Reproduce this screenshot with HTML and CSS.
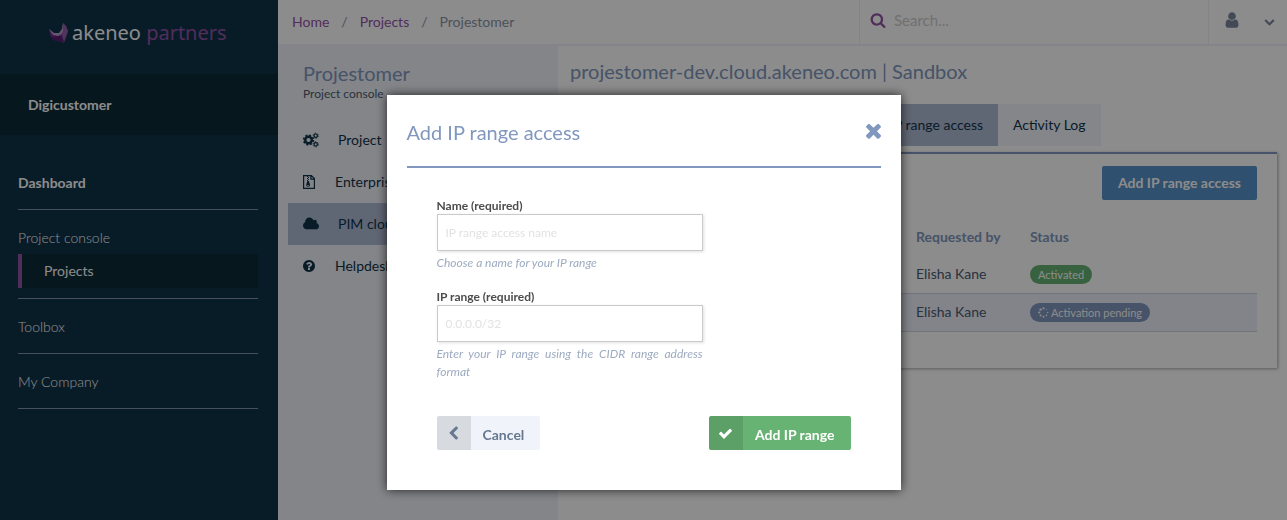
FILE: index.html
```html
<!DOCTYPE html>
<html lang="en">
<head>
<meta charset="utf-8">
<title>Akeneo partners</title>
<link rel="stylesheet" href="styles.css">
</head>
<body>
<div class="app">
  <aside class="sidebar">
    <div class="brand">
      <svg class="brand-mark" viewBox="0 0 20 20" aria-hidden="true">
        <path d="M0 6l5 4h5l3-4 1-6 3 3 2 5-1 4-3 8-5-2-6-1-3-5z" fill="#71308a"/>
        <path d="M0 6l5 4h5l3-4 1-6 1 5-2 6-4 2-5-1z" fill="#b79fc6"/>
        <path d="M14 0l3 3 2 5-4 11-2-7 1-4z" fill="#8f62a8"/>
        <path d="M3 14l9-1 3 6-6-1-5-1z" fill="#5a1c74"/>
      </svg>
      <span class="brand-name">akeneo <span class="brand-accent">partners</span></span>
    </div>
    <div class="customer">Digicustomer</div>
    <nav class="side-nav">
      <div class="side-group"><a href="#" class="side-link strong">Dashboard</a></div>
      <div class="side-group with-sub"><a href="#" class="side-link">Project console</a><a href="#" class="side-sub">Projects</a></div>
      <div class="side-group"><a href="#" class="side-link">Toolbox</a></div>
      <div class="side-group"><a href="#" class="side-link">My Company</a></div>
    </nav>
  </aside>
  <div class="workspace">
    <header class="topbar">
      <nav class="crumbs"><a href="#">Home</a><span>/</span><a href="#">Projects</a><span>/</span><span>Projestomer</span></nav>
      <label class="search">
        <svg viewBox="0 0 1792 1792" aria-hidden="true"><path d="M1216 832q0-185-131.500-316.500t-316.500-131.500-316.500 131.500-131.500 316.500 131.500 316.500 316.500 131.500 316.500-131.500 131.500-316.500zm512 832q0 52-38 90t-90 38q-54 0-90-38l-343-342q-179 124-399 124-143 0-273.500-55.500t-225-150-150-225-55.500-273.500 55.500-273.500 150-225 225-150 273.500-55.500 273.500 55.500 225 150 150 225 55.500 273.500q0 220-124 399l343 343q37 37 37 90z"/></svg>
        <input type="search" placeholder="Search..." aria-label="Search">
      </label>
      <button class="account" type="button" aria-label="Account">
        <svg class="icon-user" viewBox="0 0 1792 1792" aria-hidden="true"><path d="M1536 1399q0 109-62.500 187t-150.500 78h-854q-88 0-150.500-78t-62.500-187q0-85 8.500-160.500t31.500-152 58.500-131 94-89 134.500-34.500q131 128 313 128t313-128q76 0 134.500 34.500t94 89 58.500 131 31.500 152 8.500 160.500zm-256-887q0 159-112.500 271.500t-271.500 112.500-271.500-112.500-112.500-271.500 112.500-271.500 271.500-112.500 271.500 112.500 112.500 271.500z"/></svg>
        <svg class="icon-down" viewBox="0 0 1792 1792" aria-hidden="true"><path d="M1683 808l-742 741q-19 19-45 19t-45-19l-742-741q-19-19-19-45.500t19-45.500l166-165q19-19 45-19t45 19l531 531 531-531q19-19 45-19t45 19l166 165q19 19 19 45.500t-19 45.500z"/></svg>
      </button>
    </header>
    <div class="body">
      <section class="project">
        <h2 class="title">Projestomer</h2>
        <p class="subtitle">Project console</p>
        <nav class="project-nav">
          <a href="#" class="project-link wide">
            <svg viewBox="0 0 16 16" aria-hidden="true"><g fill="none" stroke="currentColor"><circle cx="5.500" cy="8" r="3.300" stroke-width="2.400"/><circle cx="5.500" cy="8" r="4.800" stroke-width="1.600" stroke-dasharray="2 1.770"/><circle cx="12.700" cy="3.700" r="1.700" stroke-width="1.200"/><circle cx="12.700" cy="3.700" r="2.600" stroke-width="1" stroke-dasharray="1.300 1.420"/><circle cx="12.700" cy="12.300" r="1.700" stroke-width="1.200"/><circle cx="12.700" cy="12.300" r="2.600" stroke-width="1" stroke-dasharray="1.300 1.420"/></g></svg>Project</a>
          <a href="#" class="project-link">
            <svg viewBox="0 0 16 16" aria-hidden="true"><path fill="none" stroke="currentColor" stroke-width="1.200" d="M.6 1.600h7.800l3 3v9.800H.6zM7.900 1.600v3.500h3.500"/><path fill="currentColor" d="M4 2h1v1H4zM5 3h1v1H5zM4 4h1v1H4zM5 5h1v1H5zM4 6h1v1H4zM4.300 7h1.600l1.200 4q.3 1.700-1.900 1.800-2.400 0-2-1.800zM4.300 11.200h1.800v.8H4.300z" fill-rule="evenodd"/></svg>Enterprise</a>
          <a href="#" class="project-link wide active">
            <svg viewBox="64 0 1920 1792" aria-hidden="true"><path fill="currentColor" d="M1984 1152q0 159-112.500 271.500t-271.500 112.500h-1088q-185 0-316.500-131.500t-131.500-316.500q0-132 71-241.500t187-163.500q-2-28-2-43 0-212 150-362t362-150q158 0 286.500 88t187.500 230q70-62 166-62 106 0 181 75t75 181q0 75-41 138 129 30 213 134.500t84 239.500z"/></svg>PIM cloud</a>
          <a href="#" class="project-link">
            <svg viewBox="128 128 1792 1536" preserveAspectRatio="xMinYMid meet" aria-hidden="true"><path fill="currentColor" d="M1024 1376v-192q0-14-9-23t-23-9h-192q-14 0-23 9t-9 23v192q0 14 9 23t23 9h192q14 0 23-9t9-23zm256-672q0-88-55.500-163t-138.500-116-170-41q-243 0-371 213-15 24 8 42l132 100q7 6 19 6 16 0 25-12 53-68 86-92 34-24 86-24 48 0 85.500 26t37.500 59q0 38-20 61t-68 45q-63 28-115.500 86.500t-52.500 125.500v36q0 14 9 23t23 9h192q14 0 23-9t9-23q0-19 21.500-49.500t54.500-49.500q32-18 49-28.500t46-35 44.500-48 28-60.500 12.500-81zm384 192q0 209-103 385.500t-279.500 279.500-385.500 103-385.500-103-279.500-279.500-103-385.500 103-385.500 279.500-279.500 385.500-103 385.500 103 279.500 279.500 103 385.500z"/></svg>Helpdesk</a>
        </nav>
      </section>
      <main class="main">
        <h1 class="title">projestomer-dev.cloud.akeneo.com | Sandbox</h1>
        <div class="tabs"><a href="#" class="tab active">IP range access</a><a href="#" class="tab">Activity Log</a></div>
        <div class="card">
          <button class="primary" type="button">Add IP range access</button>
          <table class="ranges">
            <colgroup><col><col class="col-user"><col class="col-status"></colgroup>
            <thead><tr><th></th><th>Requested by</th><th>Status</th></tr></thead>
            <tbody>
              <tr><td></td><td>Elisha Kane</td><td><span class="badge ok">Activated</span></td></tr>
              <tr><td></td><td>Elisha Kane</td><td><span class="badge pending"><svg viewBox="0 0 12 12" aria-hidden="true"><circle cx="2.800" cy="2.800" r="1.300"/><circle cx="1.300" cy="6" r="1.200"/><circle cx="2.800" cy="9.200" r="1.100"/><circle cx="6" cy="10.600" r="1"/><circle cx="9.200" cy="9.200" r=".9"/><circle cx="10.600" cy="6" r=".8"/><circle cx="9.200" cy="2.800" r=".6"/><circle cx="6" cy="1.400" r="1.200"/></svg>Activation pending</span></td></tr>
            </tbody>
          </table>
        </div>
      </main>
    </div>
  </div>
</div>
<div class="overlay">
  <form class="dialog" role="dialog" aria-labelledby="dialog-title">
    <div class="dialog-head">
      <h2 class="title" id="dialog-title">Add IP range access</h2>
      <button class="close" type="button" aria-label="Close"><svg viewBox="302 302 1188 1188" aria-hidden="true"><path d="M1490 1322q0 40-28 68l-136 136q-28 28-68 28t-68-28l-294-294-294 294q-28 28-68 28t-68-28l-136-136q-28-28-28-68t28-68l294-294-294-294q-28-28-28-68t28-68l136-136q28-28 68-28t68 28l294 294 294-294q28-28 68-28t68 28l136 136q28 28 28 68t-28 68l-294 294 294 294q28 28 28 68z"/></svg></button>
    </div>
    <div class="dialog-body">
      <div class="field">
        <label for="name">Name (required)</label>
        <input id="name" type="text" placeholder="IP range access name">
        <p class="hint">Choose a name for your IP range</p>
      </div>
      <div class="field">
        <label for="range">IP range (required)</label>
        <input id="range" type="text" placeholder="0.0.0.0/32">
        <p class="hint">Enter your IP range using the CIDR range address format</p>
      </div>
      <div class="actions">
        <button class="action cancel" type="button"><span class="action-icon"><svg viewBox="0 0 1792 1792" aria-hidden="true"><path d="M1427 301l-531 531 531 531q19 19 19 45t-19 45l-166 166q-19 19-45 19t-45-19l-742-742q-19-19-19-45t19-45l742-742q19-19 45-19t45 19l166 166q19 19 19 45t-19 45z"/></svg></span><span class="action-text">Cancel</span></button>
        <button class="action submit" type="button"><span class="action-icon"><svg viewBox="0 0 1792 1792" aria-hidden="true"><path d="M1671 566q0 40-28 68l-724 724-136 136q-28 28-68 28t-68-28l-136-136-362-362q-28-28-28-68t28-68l136-136q28-28 68-28t68 28l294 295 656-657q28-28 68-28t68 28l136 136q28 28 28 68z"/></svg></span><span class="action-text">Add IP range</span></button>
      </div>
    </div>
  </form>
</div>
</body>
</html>
```

FILE: styles.css
```css
* { box-sizing: border-box; }
body { margin: 0; font: 14px/20px Lato, "Liberation Sans", sans-serif; color: #4c5b70; background: #fff; }
a { text-decoration: none; color: inherit; }
h1, h2, p { margin: 0; }
button, input { font: inherit; border: 0; background: none; margin: 0; padding: 0; }
svg { display: block; flex: none; fill: currentColor; }
.title { font-size: 20px; line-height: 24px; font-weight: 400; color: #8097be; }

.app { display: flex; min-height: 100vh; }
.sidebar { flex: none; width: 278px; background: #10334a; color: #fff; }
.brand { display: flex; align-items: center; gap: 3px; height: 74px; padding: 0 49px 8px; }
.brand-mark { width: 20px; height: 20px; }
.brand-name { font: 20px/24px "Noto Sans", sans-serif; white-space: nowrap; }
.brand-accent { color: #9452a8; }
.customer { padding: 21px 28px 20px; background: #0d2a38; font-weight: 700; }
.side-nav { padding: 20px 20px 0 18px; }
.side-group { padding: 18px 0 16px; border-bottom: 1px solid #8392ac; }
.side-group.with-sub { padding-bottom: 10px; }
.side-link { display: block; font-weight: 300; }
.side-link.strong { font-weight: 700; }
.side-sub { display: block; margin-top: 6px; padding: 7px 22px; border-left: 4px solid #9452a8; background: #0d2a38; }

.workspace { flex: 1; min-width: 0; display: flex; flex-direction: column; }
.topbar { display: flex; height: 46px; border-bottom: 2px solid #f0f0fb; }
.crumbs { flex: 1; display: flex; align-items: center; gap: 12px; padding: 0 14px; color: #8a94a3; }
.crumbs a { color: #9452a8; }
.search { display: flex; align-items: center; gap: 8px; width: 350px; padding: 0 10px 4px; border: solid #f0f0f6; border-width: 0 1px; color: #9452a8; }
.search svg { width: 16px; height: 16px; }
.search input { flex: 1; min-width: 0; color: #4c5b70; font-size: 15px; }
.search input::placeholder { color: #ccc; }
.account { display: flex; align-items: center; justify-content: space-between; width: 78px; padding: 0 12px 4px 14px; color: #7a889c; }
.icon-user { width: 18px; height: 18px; }
.icon-down { width: 11px; height: 11px; margin-top: 3px; }

.body { flex: 1; display: flex; }
.project { flex: none; width: 280px; padding: 15px 0 0 10px; background: #f0f2f9; }
.project .title, .subtitle { padding-left: 15px; }
.subtitle { font-size: 12px; line-height: 18px; }
.project-nav { margin-top: 16px; color: #10334a; }
.project-link { display: flex; align-items: center; gap: 16px; height: 42px; padding: 0 15px; }
.project-link.wide { gap: 19px; }
.project-link svg { width: 16px; height: 16px; }
.project-link svg[preserveAspectRatio] { height: 12px; }
.project-link.active { background: #aebad3; }

.main { flex: 1; min-width: 0; padding: 13px 10px 20px 12px; }
.tabs { display: flex; margin-top: 21px; padding-left: 305px; color: #10334a; }
.tab { height: 42px; padding: 11px 15px; background: #f3f5fc; white-space: nowrap; }
.tab.active { background: #aebad3; }
.card { margin-top: 6px; padding: 12px 20px 36px; border-top: 2px solid #8097be; box-shadow: 1px 1px 3px rgba(0, 0, 0, .35); }
.primary { display: block; height: 34px; margin-left: auto; padding: 0 16px; border-radius: 2px; background: #5692c8; color: #fff; font-weight: 700; }
.ranges { width: 100%; margin-top: 18px; border-collapse: collapse; table-layout: fixed; text-align: left; }
.col-user { width: 114px; }
.col-status { width: 235px; }
.ranges th, .ranges td { height: 38px; padding: 0 8px; white-space: nowrap; }
.ranges th { height: 37px; color: #8097be; font-weight: 700; }
.ranges td { border-bottom: 1px solid #cdd4e1; }
.ranges tbody tr:nth-child(2) { background: #edf1fb; }
.badge { display: inline-flex; align-items: center; gap: 2px; height: 19px; padding: 0 8px; border-radius: 10px; color: #fff; font-size: 11px; vertical-align: middle; }
.badge svg { width: 11px; height: 11px; }
.badge.ok { background: #67b373; }
.badge.pending { background: #8097be; }

.overlay { position: fixed; inset: 0; padding: 95px 20px 20px; background: rgba(0, 0, 0, .45); overflow: auto; }
.dialog { max-width: 514px; margin: 0 auto; padding: 20px 20px 40px; background: #fff; box-shadow: 0 0 10px rgba(0, 0, 0, .75); }
.dialog-head { display: flex; justify-content: space-between; align-items: flex-start; padding: 5px 0 22px; border-bottom: 2px solid #8097be; }
.close { margin-top: 3px; color: #8097be; }
.close svg { width: 15px; height: 15px; overflow: visible; }
.dialog-body { padding: 30px 30px 0; }
.field { max-width: 266px; margin-bottom: 17px; font-size: 12px; line-height: 18px; }
.field label { display: block; height: 16px; line-height: 16px; color: #4c4c4c; font-weight: 700; }
.field input { display: block; width: 100%; height: 37px; padding: 0 8px; border: 1px solid #c8cacc; box-shadow: 1px 1px 3px rgba(0, 0, 0, .12); }
.field input::placeholder { color: #e2e2e2; }
.hint { margin-top: 3px; color: #9dabc0; font-style: italic; text-align: justify; }
.actions { display: flex; justify-content: space-between; margin-top: 35px; }
.action { display: flex; height: 34px; border-radius: 2px; overflow: hidden; font-weight: 700; }
.action-icon { display: flex; align-items: center; justify-content: center; width: 34px; height: 34px; background: rgba(0, 0, 0, .1); }
.action-text { padding: 9px 16px 5px 12px; }
.action svg { width: 15px; height: 15px; }
.cancel { background: #f0f4fa; color: #66788f; }
.submit { background: #67b373; color: #fff; }
```
